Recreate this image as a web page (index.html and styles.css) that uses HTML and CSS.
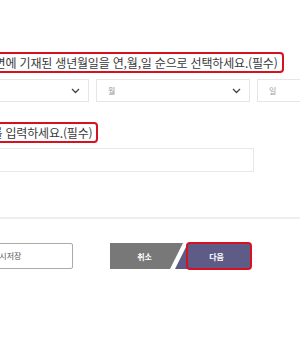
FILE: index.html
```html
<html lang="ko">
<head>
    <meta charset="UTF-8">
    <meta name="viewport" content="width=device-width, initial-scale=1.0">
    <title>본인확인</title>
    <link rel="stylesheet" href="styles.css">
</head>
<body>
    <div id="page">
        <div class="field">
            <span class="label marked">신분증 앞면에 기재된 생년월일을 연,월,일 순으로 선택하세요.(필수)</span>
            <div class="select-row">
                <div class="select"><span>년</span><svg width="9" height="6" viewBox="0 0 9 6"><path d="M1 1 L4.5 4.5 L8 1" fill="none" stroke="#444" stroke-width="1.3"/></svg></div>
                <div class="select"><span>월</span><svg width="9" height="6" viewBox="0 0 9 6"><path d="M1 1 L4.5 4.5 L8 1" fill="none" stroke="#444" stroke-width="1.3"/></svg></div>
                <div class="select"><span>일</span><svg width="9" height="6" viewBox="0 0 9 6"><path d="M1 1 L4.5 4.5 L8 1" fill="none" stroke="#444" stroke-width="1.3"/></svg></div>
            </div>
        </div>

        <div class="field second">
            <span class="label marked">전화번호를 입력하세요.(필수)</span>
            <div class="text-input"></div>
        </div>
    </div>

    <div id="divider"></div>

    <div id="page-bottom">
        <div class="save-box">임시저장</div>
        <div class="buttons">
            <button class="btn-cancel">취소</button>
            <div class="next-wrap">
                <button class="btn-next">다음</button>
                <div class="next-mark"></div>
            </div>
        </div>
    </div>
</body>
</html>
```

FILE: styles.css
```css
body {
    margin: 0;
    background-color: #fff;
    font-family: "Noto Sans CJK KR", "Noto Sans", sans-serif;
    color: #3a3a3a;
    overflow: hidden;
}

#page {
    margin-left: -65px;
    padding-top: 52px;
}

.field {
    display: flex;
    flex-direction: column;
    align-items: flex-start;
}

.field.second {
    margin-top: 20px;
}

.label {
    font-size: 12px;
    line-height: 17px;
    letter-spacing: -0.18px;
    padding: 0 4px 0 11px;
    white-space: nowrap;
}

.marked {
    border: 2px solid #d5121f;
    border-radius: 4px;
}

.select-row {
    display: flex;
    gap: 7px;
    margin-top: 6px;
}

.select {
    box-sizing: border-box;
    width: 154px;
    height: 23px;
    border: 1px solid #e6e6e6;
    display: flex;
    align-items: center;
    justify-content: space-between;
    padding: 0 8px 0 11px;
    font-size: 8px;
    color: #999;
}

.text-input {
    box-sizing: border-box;
    margin-top: 5px;
    width: 319px;
    height: 24px;
    border: 1px solid #e8e8e8;
}

#divider {
    margin-top: 45px;
    height: 2px;
    background-color: #eee;
}

#page-bottom {
    display: flex;
    align-items: center;
    margin-top: 24px;
    margin-left: -65px;
}

.save-box {
    box-sizing: border-box;
    width: 138px;
    height: 26px;
    border: 1px solid #aaa;
    border-radius: 2px;
    font-size: 8px;
    line-height: 24px;
    padding-left: 56px;
    color: #555;
}

.buttons {
    display: flex;
    margin-left: 37px;
}

button {
    border: none;
    height: 26px;
    color: #fff;
    font-family: "Noto Sans CJK KR", sans-serif;
    font-size: 8px;
    font-weight: bold;
    padding: 0;
    cursor: pointer;
}

.btn-cancel {
    width: 73px;
    background-color: #787878;
    clip-path: polygon(0 0, 100% 0, calc(100% - 13px) 100%, 0 100%);
    padding-right: 4px;
}

.next-wrap {
    position: relative;
    margin-left: -8px;
}

.btn-next {
    width: 75px;
    background-color: #5f5b87;
    clip-path: polygon(13px 0, 100% 0, 100% 100%, 0 100%);
    padding-left: 8px;
    display: block;
}

.next-mark {
    position: absolute;
    left: 11px;
    top: -1px;
    right: -2px;
    bottom: -1px;
    border: 2px solid #d5121f;
    border-radius: 4px;
}
```
